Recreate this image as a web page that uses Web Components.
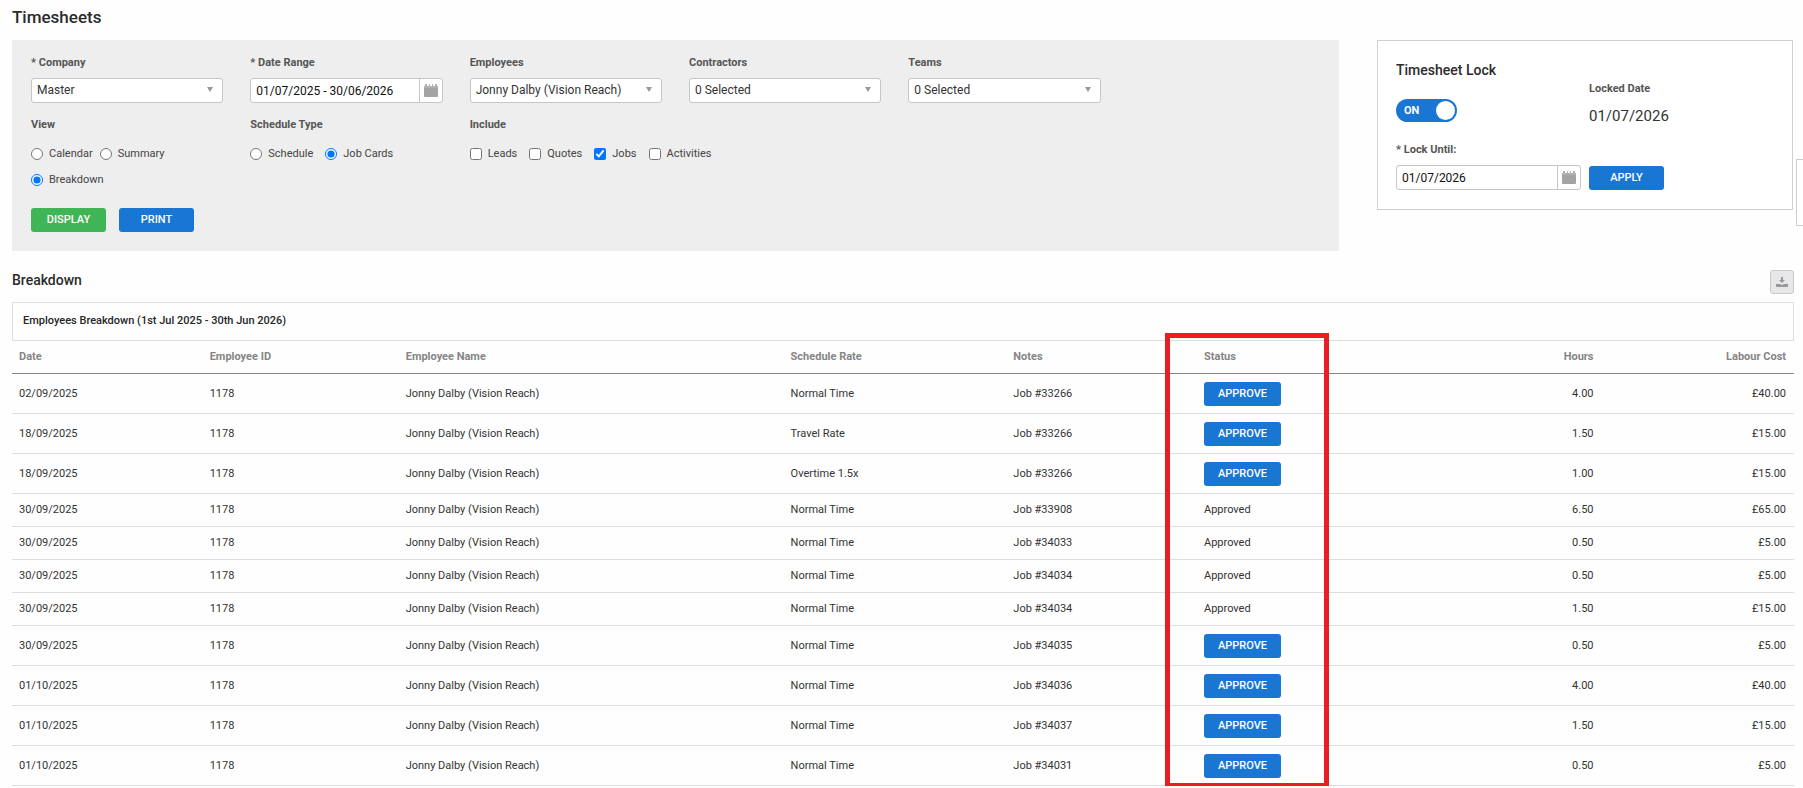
<!DOCTYPE html>
<html lang="en">
<head>
<meta charset="utf-8">
<meta name="viewport" content="width=device-width, initial-scale=1">
<title>Timesheets</title>
<style>
  body { margin: 0; background: #fefefe; color: #2f3638; font: 11px/16px Roboto, sans-serif; }
</style>
</head>
<body>
<timesheets-page></timesheets-page>

<script>
const CALENDAR = `<svg width="14" height="13" viewBox="0 0 14 13" aria-hidden="true" fill="#a3a3a3"><path d="M0 2h1V0h2v2h2V0h1v2h2V0h1v2h2V0h2v2h1v2H0z" fill="#b0b0b0"/><path d="M0 4h14v8a1 1 0 0 1-1 1H1a1 1 0 0 1-1-1z"/></svg>`;

function define(name, html, setup) {
  const template = document.createElement('template');
  template.innerHTML = html;
  customElements.define(name, class extends HTMLElement {
    connectedCallback() {
      if (this.shadowRoot) return;
      const root = this.attachShadow({ mode: 'open' });
      root.append(template.content.cloneNode(true));
      if (setup) setup.call(this, root);
    }
  });
}

define('action-button', `
<style>
  :host { display: inline-block; }
  button { box-sizing: border-box; width: 100%; min-width: 75px; height: 24px; padding: 0; border: 0; border-radius: 3px;
    background: #1976d2; color: #fff; font: 500 11px/24px Roboto, sans-serif; text-transform: uppercase; }
  :host([tone="green"]) button { background: #40b555; }
</style>
<button type="button"><slot></slot></button>`);

define('select-field', `
<style>
  :host { display: block; }
  label { display: block; margin-bottom: 7px; font: 700 11px/16px Roboto, sans-serif; color: #555; }
  .box { display: grid; align-items: center; }
  .box > * { grid-area: 1 / 1; }
  select { appearance: none; box-sizing: border-box; width: 100%; height: 25px; padding: 0 24px 1px 5px; border: 1px solid #c6c6c6;
    border-radius: 3px; background: #fff; color: #333; font: 12px/20px Roboto, sans-serif; }
  svg { justify-self: end; margin: 0 10px 3px 0; pointer-events: none; }
</style>
<label for="c"></label>
<div class="box"><select id="c"><option></option></select>
<svg width="6" height="5" viewBox="0 0 6 5" aria-hidden="true"><path d="M0 0h6L3 5z" fill="#999"/></svg></div>`,
function (root) {
  root.querySelector('label').textContent = this.getAttribute('label');
  root.querySelector('option').textContent = this.getAttribute('value');
});

define('date-field', `
<style>
  :host { display: block; }
  label { display: block; margin-bottom: 7px; font: 700 11px/16px Roboto, sans-serif; color: #555; }
  .box { box-sizing: border-box; display: flex; height: 25px; border: 1px solid #c6c6c6; border-radius: 3px; background: #fff; }
  input { flex: 1; min-width: 0; box-sizing: border-box; padding: 0 5px; border: 0; background: none; color: #111;
    font: 12px/20px Roboto, sans-serif; }
  button { display: grid; place-items: center; flex: none; width: 23px; padding: 0; border: 0; border-left: 1px solid #c6c6c6; background: none; }
</style>
<label for="c"></label>
<div class="box"><input id="c" type="text"><button type="button" aria-label="Open calendar">${CALENDAR}</button></div>`,
function (root) {
  root.querySelector('label').textContent = this.getAttribute('label');
  root.querySelector('input').value = this.getAttribute('value');
});

define('choice-group', `
<style>
  :host { display: block; }
  fieldset { margin: 0; padding: 0; border: 0; min-width: 0; }
  legend { padding: 0; font: 700 11px/16px Roboto, sans-serif; color: #555; }
  .list { display: flex; flex-wrap: wrap; gap: 10px 12px; padding-top: 13px; }
  :host([dense]) .list { column-gap: 7px; }
  :host([nowrap]) .list { flex-wrap: nowrap; }
  label { display: flex; align-items: center; gap: 6px; font: 11px/16px Roboto, sans-serif; color: #444; white-space: nowrap; }
  input { flex: none; width: 12px; height: 12px; margin: 0; accent-color: #0075ff; }
</style>
<fieldset><legend></legend><div class="list"></div></fieldset>`,
function (root) {
  root.querySelector('legend').textContent = this.getAttribute('label');
  const list = root.querySelector('.list');
  const type = this.getAttribute('type');
  for (const item of this.getAttribute('options').split(',')) {
    const label = document.createElement('label');
    const input = document.createElement('input');
    input.type = type;
    input.name = 'choice';
    input.checked = item.startsWith('+');
    label.append(input, item.replace('+', ''));
    list.append(label);
  }
});

define('filter-panel', `
<style>
  :host { display: block; box-sizing: border-box; padding: 15px 19px 19px; background: #eee; }
  .grid { display: grid; grid-template-columns: repeat(6, minmax(0, 1fr)); gap: 14px 27px; }
  .start { grid-column: 1; }
  .wide { grid-column: span 2; }
  .actions { display: flex; gap: 13px; margin-top: 20px; }
</style>
<div class="grid">
  <select-field label="* Company" value="Master"></select-field>
  <date-field label="* Date Range" value="01/07/2025 - 30/06/2026"></date-field>
  <select-field label="Employees" value="Jonny Dalby (Vision Reach)"></select-field>
  <select-field label="Contractors" value="0 Selected"></select-field>
  <select-field label="Teams" value="0 Selected"></select-field>
  <choice-group class="start" label="View" type="radio" dense options="Calendar,Summary,+Breakdown"></choice-group>
  <choice-group label="Schedule Type" type="radio" options="Schedule,+Job Cards"></choice-group>
  <choice-group class="wide" label="Include" type="checkbox" nowrap options="Leads,Quotes,+Jobs,Activities"></choice-group>
</div>
<div class="actions">
  <action-button tone="green">Display</action-button>
  <action-button>Print</action-button>
</div>`);

define('toggle-switch', `
<style>
  :host { display: block; }
  label { position: relative; display: flex; align-items: center; justify-content: space-between; box-sizing: border-box;
    width: 61px; height: 23px; padding: 0 2px 0 8px; border-radius: 12px; background: #1976d2; color: #fff; font: 700 11px/23px Roboto, sans-serif; }
  input { position: absolute; inset: 0; width: 100%; height: 100%; margin: 0; opacity: 0; }
  i { width: 19px; height: 19px; border-radius: 50%; background: #fff; }
</style>
<label><input type="checkbox" role="switch" checked><span><slot></slot></span><i></i></label>`);

define('lock-panel', `
<style>
  :host { display: block; box-sizing: border-box; padding: 19px 18px 19px; border: 1px solid #d0d0d0; background: #fff; }
  .grid { display: grid; grid-template-columns: 185px 1fr; column-gap: 8px; }
  h2 { margin: 0; font: 500 14px/20px Roboto, sans-serif; color: #2b2b2b; }
  toggle-switch { margin-top: 19px; }
  .date { padding-top: 21px; }
  .caption { font-weight: 700; color: #555; }
  .value { margin-top: 9px; font-size: 15px; line-height: 20px; color: #333; }
  date-field { margin-top: 16px; }
  action-button { align-self: end; justify-self: start; }
</style>
<div class="grid">
  <div><h2>Timesheet Lock</h2><toggle-switch>ON</toggle-switch></div>
  <div class="date"><div class="caption">Locked Date</div><div class="value">01/07/2026</div></div>
  <date-field label="* Lock Until:" value="01/07/2026"></date-field>
  <action-button>Apply</action-button>
</div>`);

define('breakdown-table', `
<style>
  :host { display: block; position: relative; }
  .caption { box-sizing: border-box; height: 39px; padding: 0 10px; border: 1px solid #dedede; font: 500 11px/35px Roboto, sans-serif; color: #262626; }
  table { width: 100%; border-collapse: separate; border-spacing: 0; table-layout: fixed; }
  th, td { box-sizing: border-box; padding: 0 8px 0 7px; text-align: left; font: 11px/16px Roboto, sans-serif; }
  th { height: 33px; border-bottom: 1px solid #858585; font-weight: 700; color: #858585; }
  td { height: 33px; border-bottom: 1px solid #dedede; color: #333; }
  tr.pending td { height: 40px; }
  th.num, td.num { text-align: right; }
  action-button { display: block; width: 77px; }
  .highlight { position: absolute; top: 31px; bottom: -2px; left: 64.7%; box-sizing: border-box; width: 164px; border: 5px solid #ec1c24; pointer-events: none; }
</style>
<div class="caption">Employees Breakdown (1st Jul 2025 - 30th Jun 2026)</div>
<table>
  <colgroup><col style="width:10.7%"><col style="width:11%"><col style="width:21.6%"><col style="width:12.5%"><col style="width:10.7%"><col style="width:11.3%"><col style="width:11.4%"><col style="width:10.8%"></colgroup>
  <thead><tr><th scope="col">Date</th><th scope="col">Employee ID</th><th scope="col">Employee Name</th><th scope="col">Schedule Rate</th><th scope="col">Notes</th><th scope="col">Status</th><th scope="col" class="num">Hours</th><th scope="col" class="num">Labour Cost</th></tr></thead>
  <tbody></tbody>
</table>
<div class="highlight"></div>`,
function (root) {
  const rows = [
    ['02/09/2025', 'Normal Time', '33266', false, '4.00', '40.00'],
    ['18/09/2025', 'Travel Rate', '33266', false, '1.50', '15.00'],
    ['18/09/2025', 'Overtime 1.5x', '33266', false, '1.00', '15.00'],
    ['30/09/2025', 'Normal Time', '33908', true, '6.50', '65.00'],
    ['30/09/2025', 'Normal Time', '34033', true, '0.50', '5.00'],
    ['30/09/2025', 'Normal Time', '34034', true, '0.50', '5.00'],
    ['30/09/2025', 'Normal Time', '34034', true, '1.50', '15.00'],
    ['30/09/2025', 'Normal Time', '34035', false, '0.50', '5.00'],
    ['01/10/2025', 'Normal Time', '34036', false, '4.00', '40.00'],
    ['01/10/2025', 'Normal Time', '34037', false, '1.50', '15.00'],
    ['01/10/2025', 'Normal Time', '34031', false, '0.50', '5.00'],
  ];
  root.querySelector('tbody').innerHTML = rows.map(([date, rate, job, approved, hours, cost]) =>
    `<tr class="${approved ? '' : 'pending'}"><td>${date}</td><td>1178</td><td>Jonny Dalby (Vision Reach)</td><td>${rate}</td><td>Job #${job}</td>` +
    `<td>${approved ? 'Approved' : '<action-button>Approve</action-button>'}</td><td class="num">${hours}</td><td class="num">£${cost}</td></tr>`).join('');
});

define('timesheets-page', `
<style>
  :host { display: block; padding: 7px 9px 0 12px; }
  h1 { margin: 0; font: 500 17px/20px Roboto, sans-serif; color: #2b2b2b; }
  .top { display: grid; grid-template-columns: 1327fr 416fr; gap: 38px; align-items: start; margin: 13px 1px 0 0; }
  .bar { display: flex; justify-content: space-between; align-items: flex-start; height: 32px; padding-top: 19px; }
  h2 { margin: 0; font: 500 14px/20px Roboto, sans-serif; color: #2b2b2b; }
  .download { display: grid; place-items: center; box-sizing: border-box; width: 24px; height: 24px; padding: 0; border: 1px solid #c9c9c9; border-radius: 3px; background: #e7e7ea; }
  aside { position: fixed; top: 159px; right: 0; box-sizing: border-box; width: 7px; height: 67px; border: 1px solid #ccc; border-right: 0; background: #fff; }
</style>
<h1>Timesheets</h1>
<div class="top"><filter-panel></filter-panel><lock-panel></lock-panel></div>
<div class="bar"><h2>Breakdown</h2>
<button class="download" type="button" aria-label="Download"><svg width="12" height="12" viewBox="0 0 12 12" fill="#999" aria-hidden="true"><path d="M5 1h2v3h2L6 7 3 4h2z"/><path d="M0 8h4l2 1 2-1h4v3H0z"/></svg></button></div>
<breakdown-table></breakdown-table>
<aside aria-label="Side panel"></aside>`);
</script>
</body>
</html>
